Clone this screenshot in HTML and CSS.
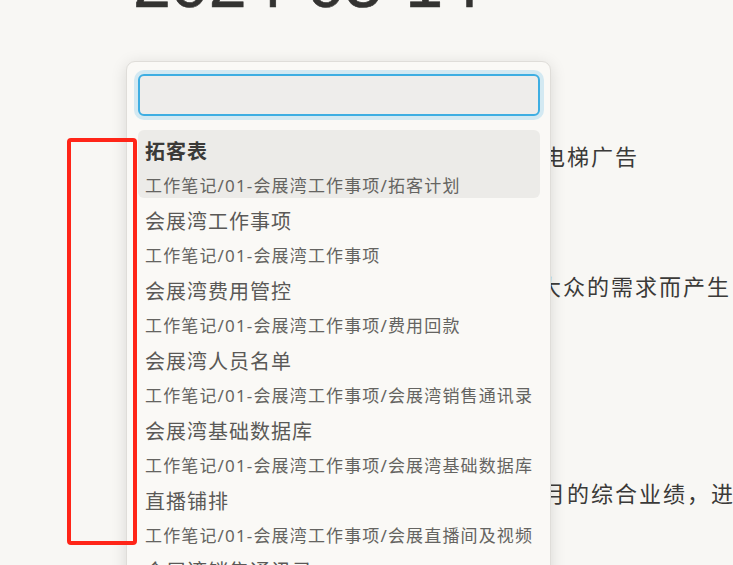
FILE: index.html
```html
<!DOCTYPE html>
<html lang="zh-CN">
<head>
<meta charset="utf-8">
<title>拓客表</title>
<link rel="stylesheet" href="styles.css">
</head>
<body>
<main class="doc">
  <h1 class="doc-title">2024-05-14</h1>
  <p class="doc-line line-a">电梯广告</p>
  <p class="doc-line line-b">大众的需求而产生</p>
  <p class="doc-line line-c">月的综合业绩，进</p>
</main>

<div class="switcher">
  <div class="search"><input class="search-input" type="text" aria-label="搜索"></div>
  <ul class="results">
    <li class="result is-selected">
      <div class="result-title">拓客表</div>
      <div class="result-path">工作笔记/01-会展湾工作事项/拓客计划</div>
    </li>
    <li class="result">
      <div class="result-title">会展湾工作事项</div>
      <div class="result-path">工作笔记/01-会展湾工作事项</div>
    </li>
    <li class="result">
      <div class="result-title">会展湾费用管控</div>
      <div class="result-path">工作笔记/01-会展湾工作事项/费用回款</div>
    </li>
    <li class="result">
      <div class="result-title">会展湾人员名单</div>
      <div class="result-path">工作笔记/01-会展湾工作事项/会展湾销售通讯录</div>
    </li>
    <li class="result">
      <div class="result-title">会展湾基础数据库</div>
      <div class="result-path">工作笔记/01-会展湾工作事项/会展湾基础数据库</div>
    </li>
    <li class="result">
      <div class="result-title">直播铺排</div>
      <div class="result-path">工作笔记/01-会展湾工作事项/会展直播间及视频</div>
    </li>
    <li class="result">
      <div class="result-title">会展湾销售通讯录</div>
      <div class="result-path">工作笔记/01-会展湾工作事项/会展湾销售通讯录</div>
    </li>
  </ul>
</div>

<div class="annotation"></div>
</body>
</html>
```

FILE: styles.css
```css
html, body {
  margin: 0;
  padding: 0;
}

body {
  width: 733px;
  height: 565px;
  overflow: hidden;
  background: #f8f7f4;
  font-family: "Noto Sans", "Noto Sans CJK SC", sans-serif;
  color: #3a3937;
  position: relative;
}

.doc {
  display: flex;
  flex-direction: column;
  padding-left: 133px;
}

.doc-title {
  margin: -51px 0 0 0;
  font-family: "Liberation Sans", Arial, sans-serif;
  font-weight: normal;
  font-size: 68px;
  line-height: 68px;
  color: #343331;
  -webkit-text-stroke: 0.6px #343331;
  white-space: nowrap;
}

.doc-line {
  margin: 0;
  font-size: 22px;
  letter-spacing: 2px;
  line-height: 32px;
  white-space: nowrap;
  color: #3b3a38;
}

.line-a { margin-top: 123px; padding-left: 410px; }
.line-b { margin-top: 98px; padding-left: 406px; }
.line-c { margin-top: 175px; padding-left: 410px; }

.switcher {
  position: absolute;
  left: 126px;
  top: 61px;
  width: 425px;
  height: 620px;
  box-sizing: border-box;
  padding: 12px 10px 0 11px;
  background: #faf9f6;
  border: 1px solid #dfddd9;
  border-radius: 9px;
  box-shadow: 0 3px 16px rgba(0, 0, 0, 0.13);
}

.search {
  display: flex;
}

.search-input {
  flex: 1;
  height: 42px;
  box-sizing: border-box;
  margin: 0;
  padding: 0 10px;
  border: 2px solid #3eaee2;
  border-radius: 6px;
  background: #eeedeb;
  box-shadow: 0 0 0 4px #d3e9f2;
  outline: none;
  font: inherit;
}

.results {
  list-style: none;
  margin: 14px 0 0 0;
  padding: 0;
  display: flex;
  flex-direction: column;
  gap: 2px;
}

.result {
  height: 68px;
  box-sizing: border-box;
  padding: 6px 7px 0 7px;
  border-radius: 6px;
  white-space: nowrap;
}

.result.is-selected {
  background: #ecebe8;
}

.result-title {
  font-size: 20px;
  letter-spacing: 1px;
  line-height: 31px;
  color: #5a5957;
}

.is-selected .result-title {
  font-weight: bold;
  color: #3b3a38;
}

.result-path {
  margin-top: 6px;
  font-size: 17px;
  letter-spacing: 1.15px;
  line-height: 25px;
  color: #656461;
}

.annotation {
  position: absolute;
  left: 67px;
  top: 138px;
  width: 70px;
  height: 407px;
  box-sizing: border-box;
  border: 4.5px solid #ff2518;
  border-radius: 4px;
}
```
